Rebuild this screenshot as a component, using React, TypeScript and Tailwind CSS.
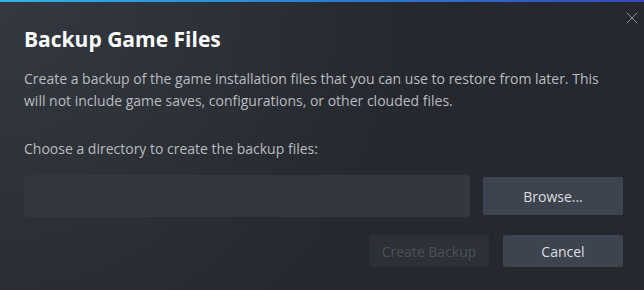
import { X } from "lucide-react";

export default function App() {
  return (
    <div
      className="relative flex h-[290px] w-[644px] flex-col overflow-hidden bg-[#25282e] font-['Open_Sans',sans-serif]"
      style={{
        backgroundImage:
          "radial-gradient(circle at top left, rgba(74,81,92,0.4) 0%, rgba(75,81,92,0) 60%)",
      }}
    >
      <div className="h-[2px] w-full bg-gradient-to-r from-[#2fb3e6] via-[#2a7fd6] to-[#3547c0]" />

      <button className="absolute right-[2px] top-[8px] flex h-[20px] w-[20px] items-center justify-center text-[#8b9099]">
        <X size={20} strokeWidth={1.2} />
      </button>

      <div className="flex flex-col pl-6 pr-[21px] pt-[23px]">
        <h1 className="text-[21px] font-bold leading-[28px] text-white">Backup Game Files</h1>

        <p className="mt-[15px] text-[14px] leading-[22px] text-[#b9bcc0]">
          Create a backup of the game installation files that you can use to restore from later. This
          will not include game saves, configurations, or other clouded files.
        </p>

        <p className="mt-[26px] text-[14px] leading-[22px] text-[#b9bcc0]">
          Choose a directory to create the backup files:
        </p>

        <div className="mt-[15px] flex items-center gap-[13px]">
          <input
            type="text"
            className="h-[42px] flex-1 rounded-[3px] bg-[#33373e] px-3 text-[14px] text-[#dcdedf] outline-none"
          />
          <button className="h-[38px] w-[140px] rounded-[2px] bg-[#3d4450] text-[14px] text-[#dcdedf]">
            Browse...
          </button>
        </div>

        <div className="mt-[18px] flex justify-end gap-[14px]">
          <button className="h-[32px] w-[120px] rounded-[2px] bg-[#2c3037] text-[14px] text-[#4b5058]">
            Create Backup
          </button>
          <button className="h-[32px] w-[120px] rounded-[2px] bg-[#3d4450] text-[14px] text-[#dcdedf]">
            Cancel
          </button>
        </div>
      </div>
    </div>
  );
}
